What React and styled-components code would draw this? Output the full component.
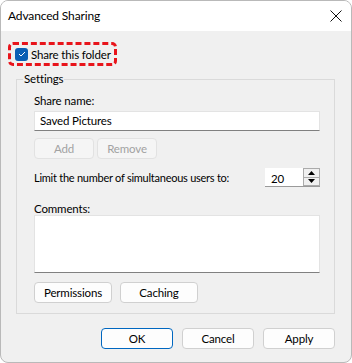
import React from 'react'
import styled, { createGlobalStyle } from 'styled-components'

const Global = createGlobalStyle`
  html, body { margin: 0; padding: 0; background: #ffffff; }
  * { box-sizing: border-box; }
`;

const Window = styled.div`
  width: 352px;
  height: 363px;
  display: flex;
  flex-direction: column;
  border: 1px solid #b9b9b9;
  border-radius: 8px;
  overflow: hidden;
  background: #f0f0f0;
  font-family: "Lato", "Noto Sans", sans-serif;
  font-size: 11.5px;
  letter-spacing: -0.15px;
  color: #000;
  white-space: nowrap;
`;

const TitleBar = styled.div`
  height: 30px;
  flex: none;
  background: #ffffff;
  display: flex;
  align-items: center;
  justify-content: space-between;
  padding: 0 9px 0 7px;
`;

const Title = styled.span`
  font-size: 12px;
  line-height: 16px;
  margin-top: -1px;
`;

const CloseBtn = styled.div`
  width: 12px;
  height: 12px;
  display: flex;
  align-items: center;
  justify-content: center;
  margin-top: -1px;
`;

const Body = styled.div`
  flex: 1;
  display: flex;
  flex-direction: column;
  padding: 11px 16px 0 15px;
`;

const Highlight = styled.div`
  align-self: flex-start;
  margin-left: -8px;
  width: 109px;
  height: 24px;
  border: 3px dashed #e8141b;
  border-radius: 5px;
  display: flex;
  align-items: center;
  gap: 3px;
  padding-left: 4px;
`;

const CheckBox = styled.span`
  width: 13px;
  height: 13px;
  flex: none;
  border-radius: 3px;
  background: #0a5fb4;
  display: flex;
  align-items: center;
  justify-content: center;
`;

const Group = styled.fieldset`
  margin: 6px 0 0 0;
  padding: 5px 14px 10px 17px;
  border: 1px solid #dadada;
  border-radius: 0;
  display: flex;
  flex-direction: column;
`;

const Legend = styled.legend`
  padding: 0 1px;
  margin-left: -11px;
  line-height: 14px;
`;

const Label = styled.div`
  line-height: 16px;
  margin-top: ${p => p.$top || 0}px;
  ${p => p.$tight && 'font-size: 11px; letter-spacing: -0.25px;'}
`;

const Field = styled.div`
  height: 20px;
  margin-top: 2px;
  background: #fff;
  border: 1px solid #e3e3e3;
  border-bottom: 1px solid #808080;
  padding: 0 5px;
  display: flex;
  align-items: center;
  line-height: 16px;
`;

const Area = styled.div`
  height: 58px;
  margin-top: -2px;
  background: #fff;
  border: 1px solid #e3e3e3;
  border-bottom: 1px solid #808080;
`;

const Row = styled.div`
  display: flex;
  align-items: center;
  gap: ${p => p.$gap || 3}px;
  margin-top: ${p => p.$top || 0}px;
  justify-content: ${p => p.$justify || 'flex-start'};
`;

const Button = styled.button`
  font: inherit;
  letter-spacing: inherit;
  width: ${p => p.$w || 72}px;
  height: 21px;
  padding: 0;
  border-radius: 4px;
  background: ${p => (p.disabled ? '#f5f5f5' : '#fdfdfd')};
  color: ${p => (p.disabled ? '#a2a2a2' : '#000')};
  border: 1px solid ${p => (p.$primary ? '#0067c0' : p.disabled ? '#e2e2e2' : '#d0d0d0')};
  line-height: 16px;
`;

const Spin = styled.div`
  margin-left: auto;
  width: 55px;
  height: 19px;
  display: flex;
  background: #fff;
  border-bottom: 1px solid #9a9a9a;
`;

const SpinValue = styled.div`
  flex: 1;
  padding: 3px 0 0 6px;
  line-height: 16px;
`;

const SpinButtons = styled.div`
  width: 17px;
  display: flex;
  flex-direction: column;
  border: 1px solid #ababab;
  background: #f0f0f0;
`;

const SpinBtn = styled.div`
  flex: 1;
  display: flex;
  align-items: center;
  justify-content: center;
  & + & { border-top: 1px solid #ababab; }
`;

const Arrow = ({ up }) => (
  <svg width="7" height="4" viewBox="0 0 7 4">
    <path d={up ? 'M0 4 L3.5 0 L7 4 Z' : 'M0 0 L3.5 4 L7 0 Z'} fill="#000" />
  </svg>
);

export default function App() {
  return (
    <>
      <Global />
      <Window>
        <TitleBar>
          <Title>Advanced Sharing</Title>
          <CloseBtn>
            <svg width="12" height="12" viewBox="0 0 12 12">
              <path d="M0.5 0.5 L11.5 11.5 M11.5 0.5 L0.5 11.5" stroke="#111" strokeWidth="1" />
            </svg>
          </CloseBtn>
        </TitleBar>
        <Body>
          <Highlight>
            <CheckBox>
              <svg width="8" height="6" viewBox="0 0 8 6">
                <path d="M1 3 L3 5 L7 1" stroke="#fff" strokeWidth="1" fill="none" />
              </svg>
            </CheckBox>
            <span>Share this folder</span>
          </Highlight>
          <Group>
            <Legend>Settings</Legend>
            <Label $top={2}>Share name:</Label>
            <Field>Saved Pictures</Field>
            <Row $top={7}>
              <Button disabled $w={60}>Add</Button>
              <Button disabled $w={60}>Remove</Button>
            </Row>
            <Row $top={9}>
              <Label $tight>Limit the number of simultaneous users to:</Label>
              <Spin>
                <SpinValue>20</SpinValue>
                <SpinButtons>
                  <SpinBtn><Arrow up /></SpinBtn>
                  <SpinBtn><Arrow /></SpinBtn>
                </SpinButtons>
              </Spin>
            </Row>
            <Label $top={14}>Comments:</Label>
            <Area />
            <Row $top={9} $gap={8}>
              <Button $w={78}>Permissions</Button>
              <Button $w={78}>Caching</Button>
            </Row>
          </Group>
          <Row $top={14} $gap={9} $justify="flex-end">
            <Button $primary>OK</Button>
            <Button>Cancel</Button>
            <Button>Apply</Button>
          </Row>
        </Body>
      </Window>
    </>
  )
}
